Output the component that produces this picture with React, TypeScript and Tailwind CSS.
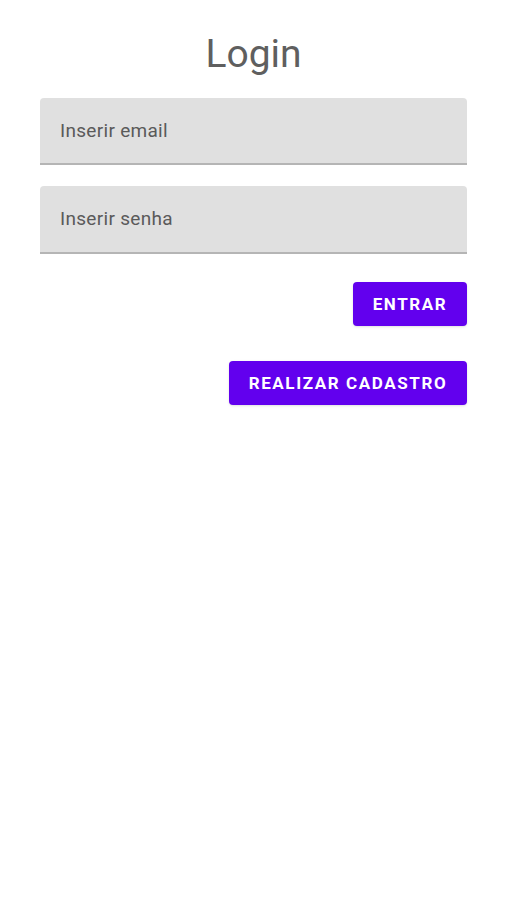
export default function App() {
  return (
    <div className="min-h-[900px] w-full bg-white" style={{ fontFamily: 'Roboto, "Noto Sans", sans-serif' }}>
      <div className="flex flex-col pl-[40px] pr-[39px] pt-[30px]">
        <h1 className="text-center text-[39px] leading-[48px] text-[#5f5f5f] font-normal">Login</h1>
        <div className="mt-[20px] h-[67px] rounded-t-[4px] bg-[#e0e0e0] border-b-2 border-[#b5b5b5] flex items-center px-[20px] pt-[1px]">
          <span className="text-[19px] tracking-[0.3px] text-[#5a5a5a]">Inserir email</span>
        </div>
        <div className="mt-[21px] h-[68px] rounded-t-[4px] bg-[#e0e0e0] border-b-2 border-[#b5b5b5] flex items-center px-[20px] pt-[1px]">
          <span className="text-[19px] tracking-[0.3px] text-[#5a5a5a]">Inserir senha</span>
        </div>
        <div className="mt-[28px] flex justify-end">
          <button className="h-[44px] w-[114px] rounded-[4px] bg-[#6200ee] text-white text-[17px] font-bold tracking-[1.6px] shadow-sm pt-[1px]">ENTRAR</button>
        </div>
        <div className="mt-[35px] flex justify-end">
          <button className="h-[44px] w-[238px] rounded-[4px] bg-[#6200ee] text-white text-[17px] font-bold tracking-[1.6px] shadow-sm pt-[1px]">REALIZAR CADASTRO</button>
        </div>
      </div>
    </div>
  );
}
